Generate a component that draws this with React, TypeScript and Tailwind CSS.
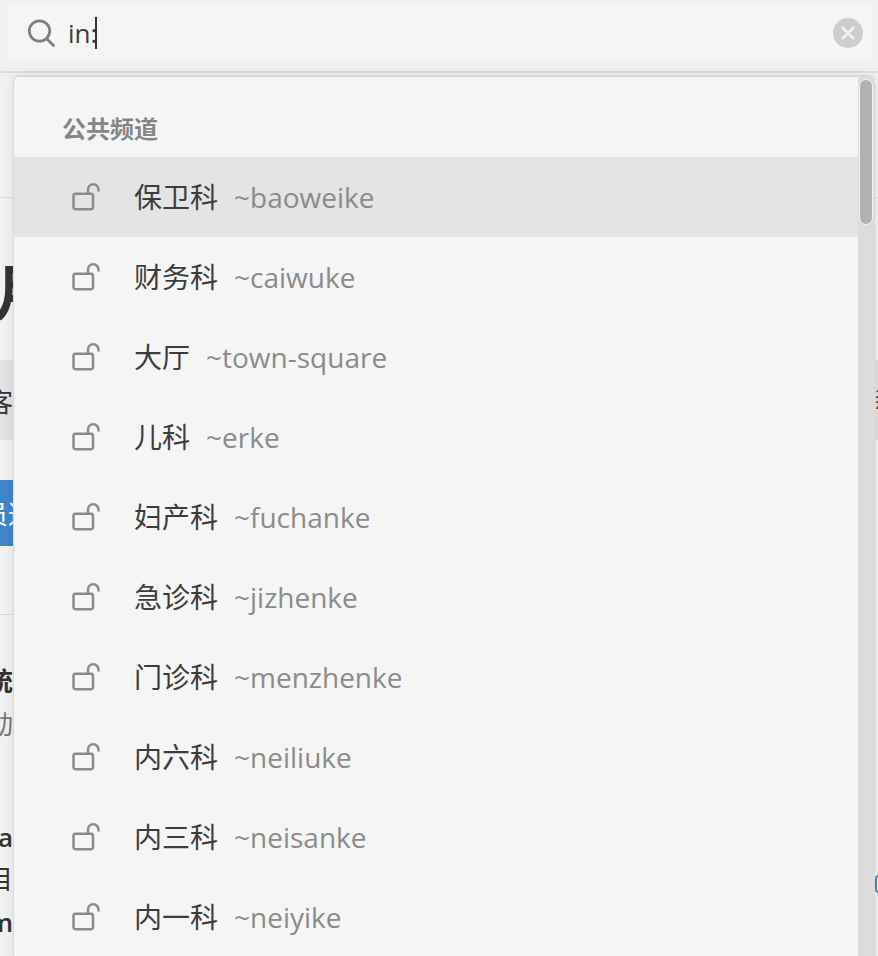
const font = { fontFamily: '"Open Sans","Noto Sans CJK SC",sans-serif' };

const channels: [string, string][] = [
  ["保卫科", "~baoweike"],
  ["财务科", "~caiwuke"],
  ["大厅", "~town-square"],
  ["儿科", "~erke"],
  ["妇产科", "~fuchanke"],
  ["急诊科", "~jizhenke"],
  ["门诊科", "~menzhenke"],
  ["内六科", "~neiliuke"],
  ["内三科", "~neisanke"],
  ["内一科", "~neiyike"],
  ["内二科", "~neierke"],
];

function UnlockIcon() {
  return (
    <svg width="28" height="28" viewBox="0 0 28 28" fill="none" stroke="#8b8b8b" strokeWidth="2.5" className="shrink-0">
      <rect x="1.5" y="10.7" width="19.5" height="15.5" rx="2.2" />
      <path d="M16 10.5V6.5a5 5 0 0 1 10.5 0V8.5" />
    </svg>
  );
}

function SearchIcon() {
  return (
    <svg width="28" height="28" viewBox="0 0 28 28" fill="none" stroke="#808080" strokeWidth="2.8" className="shrink-0">
      <circle cx="12.5" cy="12" r="10.2" />
      <path d="M20 20l6.5 6.5" strokeLinecap="round" />
    </svg>
  );
}

function ClearIcon() {
  return (
    <div className="flex h-[30px] w-[30px] items-center justify-center rounded-full bg-[#cdcdcd]">
      <svg width="16" height="16" viewBox="0 0 16 16" fill="none" stroke="#f2f2f2" strokeWidth="2.8">
        <path d="M2 2l12 12M14 2L2 14" />
      </svg>
    </div>
  );
}

function LeftStrip() {
  return (
    <div className="flex w-[13px] shrink-0 flex-col overflow-hidden text-[#333]">
      <div className="flex h-[162px] shrink-0 items-center justify-start whitespace-nowrap pt-[26px] text-[60px] font-semibold">
        <span className="-ml-[6px]">月</span>
      </div>
      <div className="flex h-[80px] shrink-0 items-center justify-end whitespace-nowrap bg-[#e2e2e2] pt-[4px] text-[26px]">客</div>
      <div className="h-[40px] shrink-0" />
      <div className="flex h-[66px] shrink-0 items-center justify-start whitespace-nowrap bg-[#3f86c8] pt-[2px] text-[26px] text-white">
        <span className="-ml-[18px]">员通</span>
      </div>
      <div className="h-[69px] shrink-0 border-b border-[#d9d9d9]" />
      <div className="flex h-[84px] shrink-0 items-end justify-end whitespace-nowrap text-[26px] font-semibold leading-[36px]">统</div>
      <div className="flex h-[46px] shrink-0 items-center justify-end whitespace-nowrap pt-[4px] text-[26px] text-[#777]">动</div>
      <div className="h-[72px] shrink-0" />
      <div className="flex h-[40px] shrink-0 items-center justify-end whitespace-nowrap text-[26px] font-semibold">a</div>
      <div className="flex h-[44px] shrink-0 items-center justify-end whitespace-nowrap text-[26px]">目</div>
      <div className="flex h-[42px] shrink-0 items-center justify-end whitespace-nowrap text-[26px] font-semibold">m</div>
    </div>
  );
}

function RightStrip() {
  return (
    <div className="flex w-[3px] shrink-0 flex-col overflow-hidden text-[#333]">
      <div className="h-[162px] shrink-0" />
      <div className="flex h-[80px] shrink-0 items-center justify-start whitespace-nowrap bg-[#e2e2e2] text-[26px]">新</div>
      <div className="h-[435px] shrink-0" />
      <div className="h-[18px] w-[8px] shrink-0 rounded-sm border-2 border-[#3f86c8]" />
    </div>
  );
}

export default function App() {
  return (
    <div className="relative flex h-[956px] w-[878px] flex-col overflow-hidden bg-[#f1f1f1]" style={font}>
      <header className="flex h-[73px] shrink-0 items-start border-b-2 border-[#dedede] pl-2 pr-[6px] pt-[5px]">
        <div className="flex h-[55px] w-full items-center rounded-lg bg-[#f5f5f5] pl-[19px] pr-[9px]">
          <SearchIcon />
          <div className="ml-[13px] flex items-center text-[26px] leading-none text-[#3d3d3d]">
            <span>in:</span>
            <span className="-ml-[2px] h-[32px] w-[2px] bg-[#333]" />
          </div>
          <div className="ml-auto">
            <ClearIcon />
          </div>
        </div>
      </header>
      <div className="flex min-h-0 flex-1 flex-col">
        <div className="h-[125px] shrink-0 border-b border-[#dcdcdc]" />
        <div className="flex min-h-0 flex-1 justify-between">
          <LeftStrip />
          <RightStrip />
        </div>
      </div>

      <div className="absolute bottom-[-8px] left-[13px] top-[75px] flex w-[862px] overflow-hidden rounded-t-md border border-t-2 border-[#d9d9d9] bg-[#f5f5f5] shadow-[0_0_12px_rgba(0,0,0,0.08)]">
        <div className="min-w-0 flex-1">
          <div className="flex h-[80px] items-end pb-[12px] pl-[48px] text-[24px] font-semibold leading-8 text-[#858585]">公共频道</div>
          {channels.map(([name, handle], i) => (
            <div key={handle} className={i === 0 ? "flex h-[80px] items-center bg-[#e4e4e4] pl-[58px]" : "flex h-[80px] items-center pl-[58px]"}>
              <UnlockIcon />
              <span className="ml-[34px] text-[28px] leading-none text-[#3d3d3d]">{name}</span>
              <span className="ml-4 text-[28px] leading-none text-[#8b8b8b]">{handle}</span>
            </div>
          ))}
        </div>
        <div className="w-[16px] shrink-0 bg-[#dcdcdc]">
          <div className="ml-[1px] mt-[2px] h-[146px] w-[14px] rounded-full border border-[#f5f5f5] bg-[#b1b1b1]" />
        </div>
      </div>
    </div>
  );
}
